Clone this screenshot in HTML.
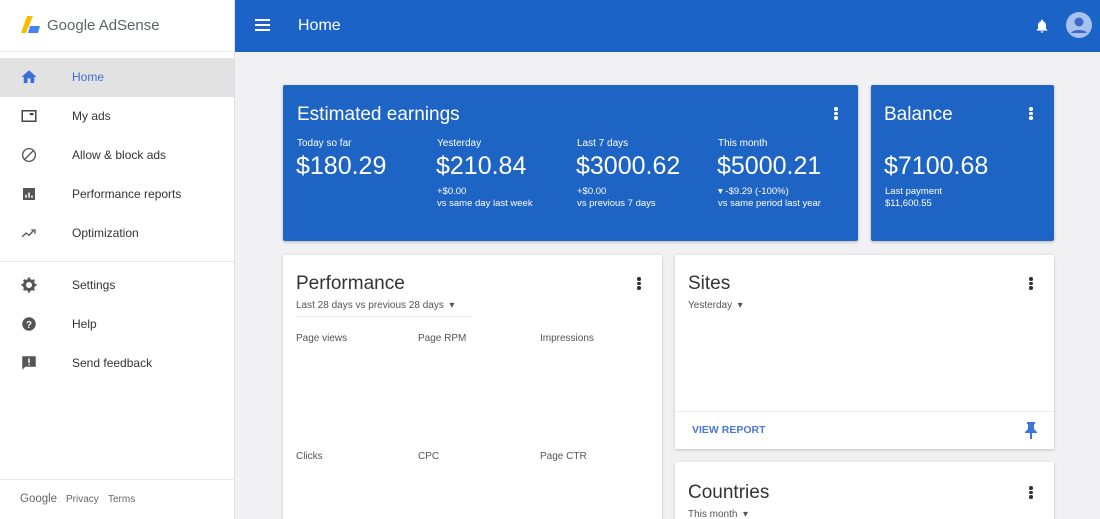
<!DOCTYPE html>
<html><head><meta charset="utf-8"><style>
*{margin:0;padding:0;box-sizing:border-box}
html,body{width:1100px;height:519px;overflow:hidden}
body{background:#f1f1f3;font-family:"Liberation Sans",Arial,sans-serif;position:relative}
.a{position:absolute}
.side{left:0;top:0;width:235px;height:519px;background:#fff;border-right:1px solid #e0e0e0}
.nav{left:0;width:235px;height:39px}
.nav .t{position:absolute;left:72px;top:12px;font-size:12px;color:#333}
.nav svg{position:absolute;left:20px;top:10px}
.top{left:235px;top:0;width:865px;height:52px;background:#1b63c6}
.card{background:#fff;border-radius:2px;box-shadow:0 1px 3px rgba(0,0,0,.2)}
.blue{background:#1e64c4;color:#fff;box-shadow:0 1px 3px rgba(0,0,0,.25)}
.dots{width:4px}
.dots i{display:block;width:3.5px;height:3.5px;border-radius:50%;background:currentColor;margin-bottom:1.2px}
.lbl{font-size:10px}
.big{font-size:25px}
.sm{font-size:9.5px;line-height:12px}
.g{font-size:10px;color:#555}
</style></head><body>
<div class="a side">
  <svg class="a" style="left:21px;top:16px" width="20" height="19" viewBox="0 0 20 19"><path d="M6 0h6L5 17H0z" fill="#fbbc04"/><path d="M9 10h10l-2 7H7z" fill="#4285f4"/></svg>
  <div class="a" style="left:47px;top:17px;font-size:15px;color:#5f6368">Google AdSense</div>
  <div class="a" style="left:0;top:51px;width:235px;height:1px;background:#e8e8e8"></div>
  <div class="a nav" style="top:58px;background:#e2e2e2"><svg width="18" height="18" viewBox="0 0 24 24"><path d="M10 20v-6h4v6h5v-8h3L12 3 2 12h3v8z" fill="#3b6fd8"/></svg><span class="t" style="color:#3b6fd8">Home</span></div>
  <div class="a nav" style="top:97px"><svg width="18" height="18" viewBox="0 0 24 24"><rect x="3" y="5" width="18" height="14" fill="none" stroke="#444" stroke-width="2"/><rect x="13" y="8" width="5" height="3" fill="#444"/></svg><span class="t">My ads</span></div>
  <div class="a nav" style="top:136px"><svg width="18" height="18" viewBox="0 0 24 24"><circle cx="12" cy="12" r="8.5" fill="none" stroke="#555" stroke-width="1.8"/><path d="M6 18L18 6" stroke="#555" stroke-width="1.8"/></svg><span class="t">Allow &amp; block ads</span></div>
  <div class="a nav" style="top:175px"><svg width="18" height="18" viewBox="0 0 24 24"><rect x="4" y="4" width="16" height="16" fill="#555"/><path d="M8 17v-4M12 17v-7M16 17v-3" stroke="#fff" stroke-width="2"/></svg><span class="t">Performance reports</span></div>
  <div class="a nav" style="top:214px"><svg width="18" height="18" viewBox="0 0 24 24"><path d="M3 17l5-5 4 3 6-6" fill="none" stroke="#555" stroke-width="1.8"/><path d="M15 8h5v5" fill="none" stroke="#555" stroke-width="1.8"/></svg><span class="t">Optimization</span></div>
  <div class="a" style="left:0;top:261px;width:235px;height:1px;background:#e8e8e8"></div>
  <div class="a nav" style="top:266px"><svg width="18" height="18" viewBox="0 0 24 24"><circle cx="12" cy="12" r="6" fill="none" stroke="#555" stroke-width="4"/><path d="M12 2v4M12 18v4M2 12h4M18 12h4M5 5l3 3M16 16l3 3M5 19l3-3M16 8l3-3" stroke="#555" stroke-width="3"/></svg><span class="t">Settings</span></div>
  <div class="a nav" style="top:305px"><svg width="18" height="18" viewBox="0 0 24 24"><circle cx="12" cy="12" r="9" fill="#555"/><text x="12" y="17" font-size="13" font-weight="bold" fill="#fff" text-anchor="middle" font-family="Liberation Sans">?</text></svg><span class="t">Help</span></div>
  <div class="a nav" style="top:344px"><svg width="18" height="18" viewBox="0 0 24 24"><path d="M3 3h18v14H7l-4 4z" fill="#555"/><path d="M12 6v6M12 13.5v1.5" stroke="#fff" stroke-width="2"/></svg><span class="t">Send feedback</span></div>
  <div class="a" style="left:0;top:479px;width:235px;height:1px;background:#e8e8e8"></div>
  <div class="a" style="left:20px;top:493px;font-size:11.5px;color:#666">Google</div>
  <div class="a" style="left:66px;top:494px;font-size:10px;color:#666">Privacy</div>
  <div class="a" style="left:108px;top:494px;font-size:10px;color:#666">Terms</div>
</div>
<div class="a top">
  <svg class="a" style="left:20px;top:19px" width="15" height="12"><path d="M0 1h15M0 6h15M0 11h15" stroke="#fff" stroke-width="2"/></svg>
  <div class="a" style="left:63px;top:17px;font-size:16px;color:#fff">Home</div>
  <svg class="a" style="left:799px;top:17px" width="16" height="18" viewBox="0 0 24 24"><path d="M12 22a2 2 0 002-2h-4a2 2 0 002 2zm6-6v-5c0-3-2-5.6-4.5-6.2V4a1.5 1.5 0 00-3 0v.8C8 5.4 6 8 6 11v5l-2 2v1h16v-1z" fill="#fff"/></svg>
  <svg class="a" style="left:831px;top:12px" width="26" height="26" viewBox="0 0 26 26"><circle cx="13" cy="13" r="13" fill="#a9c1ee"/><circle cx="13" cy="10" r="4.5" fill="#3a6bc9"/><path d="M5 21c2-4 14-4 16 0" fill="#3a6bc9"/></svg>
</div>
<div class="a blue" style="left:283px;top:85px;width:575px;height:156px;border-radius:2px">
  <div class="a" style="left:14px;top:19px;font-size:19px">Estimated earnings</div>
  <div class="a dots" style="left:551px;top:22px;color:#fff"><i></i><i></i><i></i></div>
  <div class="a lbl" style="left:14px;top:53px">Today so far</div>
  <div class="a big" style="left:13px;top:67px">$180.29</div>
  <div class="a lbl" style="left:154px;top:53px">Yesterday</div>
  <div class="a big" style="left:153px;top:67px">$210.84</div>
  <div class="a sm" style="left:154px;top:101px">+$0.00<br>vs same day last week</div>
  <div class="a lbl" style="left:294px;top:53px">Last 7 days</div>
  <div class="a big" style="left:293px;top:67px">$3000.62</div>
  <div class="a sm" style="left:294px;top:101px">+$0.00<br>vs previous 7 days</div>
  <div class="a lbl" style="left:435px;top:53px">This month</div>
  <div class="a big" style="left:434px;top:67px">$5000.21</div>
  <div class="a sm" style="left:435px;top:101px">▾ -$9.29 (-100%)<br>vs same period last year</div>
</div>
<div class="a blue" style="left:871px;top:85px;width:183px;height:156px;border-radius:2px">
  <div class="a" style="left:13px;top:19px;font-size:19px">Balance</div>
  <div class="a dots" style="left:158px;top:22px;color:#fff"><i></i><i></i><i></i></div>
  <div class="a big" style="left:13px;top:67px">$7100.68</div>
  <div class="a sm" style="left:14px;top:101px">Last payment<br>$11,600.55</div>
</div>
<div class="a card" style="left:283px;top:255px;width:379px;height:280px">
  <div class="a" style="left:13px;top:18px;font-size:19px;color:#333">Performance</div>
  <div class="a dots" style="left:354px;top:22px;color:#333"><i></i><i></i><i></i></div>
  <div class="a g" style="left:13px;top:45px">Last 28 days vs previous 28 days &nbsp;▾</div>
  <div class="a" style="left:13px;top:61px;width:175px;height:1px;background:#eee"></div>
  <div class="a g" style="left:13px;top:78px">Page views</div>
  <div class="a g" style="left:135px;top:78px">Page RPM</div>
  <div class="a g" style="left:257px;top:78px">Impressions</div>
  <div class="a g" style="left:13px;top:196px">Clicks</div>
  <div class="a g" style="left:135px;top:196px">CPC</div>
  <div class="a g" style="left:257px;top:196px">Page CTR</div>
</div>
<div class="a card" style="left:675px;top:255px;width:379px;height:194px">
  <div class="a" style="left:13px;top:18px;font-size:19px;color:#333">Sites</div>
  <div class="a dots" style="left:354px;top:22px;color:#333"><i></i><i></i><i></i></div>
  <div class="a g" style="left:13px;top:45px">Yesterday &nbsp;▾</div>
  <div class="a" style="left:0;top:156px;width:379px;height:1px;background:#eee"></div>
  <div class="a" style="left:17px;top:169px;font-size:10.5px;font-weight:bold;color:#4a78d8">VIEW REPORT</div>
  <svg class="a" style="left:350px;top:167px" width="12" height="17" viewBox="0 0 12 17"><path d="M2 0h8v2H9v5l3 3v1H7v6H5v-6H0v-1l3-3V2H2z" fill="#3e74dc"/></svg>
</div>
<div class="a card" style="left:675px;top:462px;width:379px;height:80px">
  <div class="a" style="left:13px;top:20px;font-size:19px;color:#333">Countries</div>
  <div class="a dots" style="left:354px;top:24px;color:#333"><i></i><i></i><i></i></div>
  <div class="a g" style="left:13px;top:47px">This month &nbsp;▾</div>
</div>
</body></html>
